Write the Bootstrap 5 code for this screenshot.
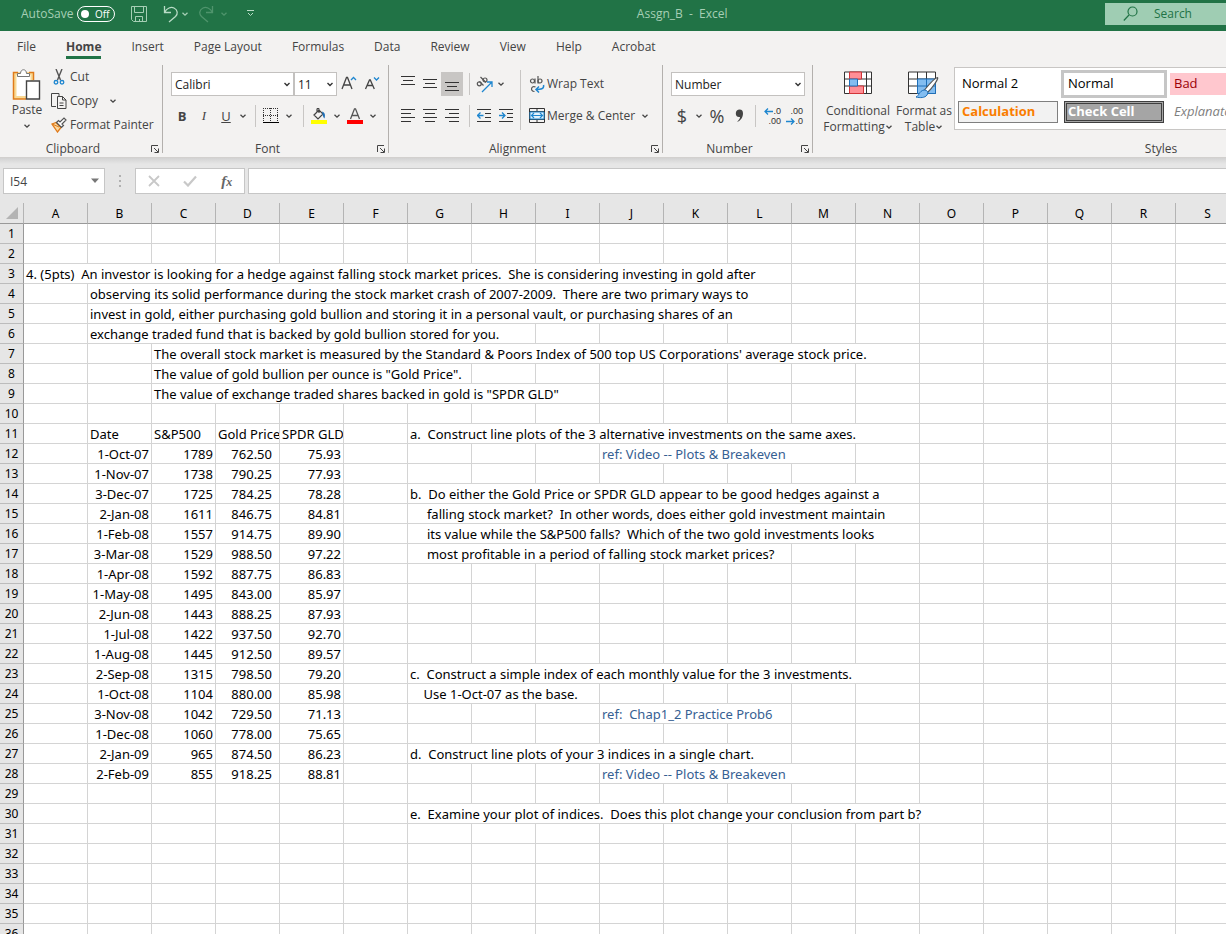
<!DOCTYPE html>
<html lang="en">
<head>
<meta charset="utf-8">
<meta name="viewport" content="width=device-width, initial-scale=1">
<title>Assgn_B - Excel</title>
<link href="https://cdn.jsdelivr.net/npm/bootstrap@5.3.0/dist/css/bootstrap.min.css" rel="stylesheet">
<style>
body{font:12px/16px "Open Sans","Noto Sans",sans-serif;color:#444;background:#e6e6e6}
button{font:inherit;color:inherit;background:none;border:0;padding:0}
svg{display:block;flex:none;fill:none}
.titlebar{background:#217346;color:#a6cfb5;height:31px;padding:0 0 4px 21px}
.autosw{appearance:none;width:38px;height:16px;border:1px solid #fff;border-radius:8px;margin:0}
.switch-wrap{display:grid;color:#fff}
.switch-wrap>*{grid-area:1/1}
.switch-face{padding:0 6px 0 4px;font-size:10px;pointer-events:none}
.knob{width:8px;height:8px;border-radius:50%;background:#fff}
.searchbox{background:#9fcdb3;color:#217346;height:22px;width:121px;padding-left:18px;gap:16px}
.searchbox input{background:none;border:0;padding:0;width:60px;color:#217346}
.searchbox input::placeholder{color:#217346;opacity:1}
.ribbon{background:#f3f2f1;border-bottom:1px solid #d2d0ce}
.tabs{gap:30px;padding:6px 17px 0;height:31px}
.tabs a{color:#444;text-decoration:none;line-height:20px;height:22px}
.tabs a.active{font-weight:700;border-bottom:3px solid #217346}
.groups{height:95px;padding-top:3px;overflow:hidden}
.rgroup{flex:none;position:relative;height:92px}
.rgroup+.rgroup::before{content:"";position:absolute;left:-1px;top:0;height:88px;width:1px;background:#b3b0ad}
.rgroup .body-area{height:76px}
.glabel{height:16px}
.launch{width:17px;height:16px}
.g-clip{width:163px}.g-font{width:226px}.g-align{width:274px}.g-num{width:150px}.g-styles{width:696px}
.rows{padding:3px 0 0 8px}
.rrow{height:32px}
.cliprow{height:24px;gap:3px}
.b12{width:12px;height:24px}.b20{width:20px;height:24px}.b22{width:22px;height:24px}.b24{width:24px;height:24px}
.b12{display:flex;align-items:center;justify-content:center}
.pressed{background:#c8c6c4}
.vsep{width:1px;height:22px;background:#c8c6c4;margin:0 3px 0 6px}
.vtall{width:1px;height:60px;background:#c8c6c4;margin:2px 8px 0 3px}
.combo{height:24px;border:1px solid #c3c1bf;border-radius:0;padding:1px 14px 0 3px;font-size:12px;line-height:21px;color:#222;background-color:#fff;background-position:right 2px center;background-size:8px;
background-image:url("data:image/svg+xml,%3csvg xmlns='http://www.w3.org/2000/svg' viewBox='0 0 8 8'%3e%3cpath d='M1.5 3L4 5.5 6.5 3' fill='none' stroke='%23333' stroke-width='1.4'/%3e%3c/svg%3e")}
.c-face{width:123px}.c-size{width:43px}.c-num{width:134px}
.fb{font-size:13px}
.big{font-size:18px;line-height:24px}
.dec{font:9px/10px "Liberation Sans",sans-serif;color:#333}
.dec .with-arrow{height:10px}
.gallery{background:#fff;border:1px solid #c8c6c4;width:530px;height:63px;padding:5px 3px;display:grid;grid-template-columns:repeat(4,100px);grid-auto-rows:22px;gap:6px;overflow:hidden}
.gallery button{text-align:left;padding:0 4px 2px;font:13px/18px "Open Sans","Noto Sans",sans-serif;color:#000;white-space:nowrap;overflow:hidden}
.gallery .picked{outline:3px solid #c6c6c6}
.gallery .bad{background:#ffc7ce;color:#9c0006}
.gallery .calc{background:#f2f2f2;border:1px solid #7f7f7f;color:#fa7d00;font-weight:700;padding-left:3px}
.gallery .check{background:#a5a5a5;border:3px double #3f3f3f;color:#fff;font-weight:700;padding:0 1px 2px;line-height:14px}
.gallery .expl{color:#7f7f7f;font-style:italic}
.fbar{background:linear-gradient(#d2d2d2,#e6e6e6 6px);padding:10px 0 9px 3px}
.fbox{background:#fff;border:1px solid #c6c6c6;height:26px}
.fbox input,.fbox-input{border:0;outline:0;width:70px;padding:1px 6px 0;color:#444}
.namebox{width:102px}.fxbox{width:110px}
.fbox-input{border:1px solid #c6c6c6;border-right:0;height:26px;flex:1;margin-left:3px}
.dots{width:30px}
.sheet{flex:1;overflow:hidden;background:#e6e6e6}
.grid{table-layout:fixed;border-collapse:separate;border-spacing:0;width:1240px;font:13px/18px "Noto Sans","Open Sans",sans-serif;color:#000}
.grid col{width:64px}.grid col:first-child{width:24px}
.grid th{font-weight:400;text-align:center;background:#e6e6e6;padding:1px 0 0;font-size:12px}
.grid thead th{height:21px;border-bottom:1px solid #999;border-right:1px solid #b4b4b4}
.grid tbody th{height:20px;border-right:1px solid #999;border-bottom:1px solid #bcbcbc}
.grid td{height:20px;background:#fff;border-right:1px solid #d4d4d4;border-bottom:1px solid #d4d4d4;padding:0 2px;white-space:pre;overflow:hidden}
.grid td.num{text-align:right}
.grid td.acct{text-align:right;padding-right:7px}
.grid td.ref{color:#366092}
.grid td.flush{padding-right:0}
</style>
</head>
<body class="d-flex flex-column vh-100 overflow-hidden">
<svg width="0" height="0" class="position-absolute" aria-hidden="true">
<symbol id="chev" viewBox="0 0 8 8"><path d="M1.500 2.800L4 5.200 6.500 2.800" stroke="currentColor" stroke-width="1.300"/></symbol>
<symbol id="launch" viewBox="0 0 10 10"><path d="M1.500 8V1.500H8M4 4l4 4M8.500 4.500v4h-4" stroke="#444"/></symbol>
</svg>

<header class="titlebar d-flex align-items-center">
<label for="auto" class="me-1">AutoSave</label>
<span class="switch-wrap"><input class="autosw" type="checkbox" role="switch" id="auto"><span class="switch-face d-flex align-items-center justify-content-between"><i class="knob"></i><span>Off</span></span></span>
<button class="ms-3" aria-label="Save"><svg width="16" height="18" viewBox="0 0 16 18" stroke="#a6cfb5"><path d="M.5 1.500h15v15H2.500l-2-2zM3.500 1.500v6h9v-6M4.500 16.500v-5h7v5M8.500 14v2"/></svg></button>
<button class="ms-3" aria-label="Undo"><svg width="16" height="18" viewBox="0 0 16 18" stroke="#b9dcc6" stroke-width="1.300"><path d="M1.500 1v6.500H8M1.500 7.500C4 3 8 1.500 11 3c4 2 4 6 1.500 8.500L6 17"/></svg></button>
<button class="b12" aria-label="Undo list"><svg width="8" height="8"><use href="#chev"/></svg></button>
<button class="ms-2" aria-label="Redo"><svg width="15" height="18" viewBox="0 0 15 18" stroke="#4f946c" stroke-width="1.300"><path d="M13.500 1v6.500H7M13.500 7.500C11 3 7 1.500 4 3 0 5 0 9 2.500 11.500L9 17"/></svg></button>
<button class="b12 ms-1" aria-label="Redo list" style="color:#4f946c"><svg width="8" height="8"><use href="#chev"/></svg></button>
<button class="ms-3" aria-label="Customize toolbar"><svg width="9" height="9" viewBox="0 0 9 9" stroke="#b9dcc6"><path d="M1 1.500h7M2 4l2.500 2.500L7 4"/></svg></button>
<div class="mx-auto ps-1" style="white-space:pre">Assgn_B  -  Excel</div>
<div class="searchbox d-flex align-items-center"><svg width="15" height="16" viewBox="0 0 15 16" stroke="#217346" stroke-width="1.200"><circle cx="9.500" cy="5.500" r="4.500"/><path d="M6 9L.8 14.500"/></svg><input type="search" placeholder="Search" aria-label="Search"></div>
</header>

<section class="ribbon">
<nav class="tabs d-flex"><a href="#">File</a><a href="#" class="active">Home</a><a href="#">Insert</a><a href="#">Page Layout</a><a href="#">Formulas</a><a href="#">Data</a><a href="#">Review</a><a href="#">View</a><a href="#">Help</a><a href="#">Acrobat</a></nav>
<div class="groups d-flex">

<div class="rgroup g-clip">
<div class="body-area d-flex">
<button class="d-flex flex-column align-items-center" style="width:51px;padding:3px 0 0 3px"><svg width="30" height="34" viewBox="0 0 30 34"><path d="M3 5.500h17v24H3z" fill="#fff" stroke="#f9d993" stroke-width="3"/><path d="M6 4.500H1.500V31H14M17 4.500h4.500V12" stroke="#e07b1a" stroke-width="1.500"/><path d="M5.500 8.500v-3h3c0-5 6-5 6 0h3v3z" fill="#fff" stroke="#777"/><path d="M14.500 13h13v18h-13z" fill="#fff" stroke="#444" stroke-width="1.400"/></svg><span class="pt-0">Paste</span><svg width="8" height="14" viewBox="0 -4 8 14"><use href="#chev" width="8" height="8"/></svg></button>
<div class="d-flex flex-column align-items-start">
<button class="cliprow d-flex align-items-center"><svg width="16" height="16" viewBox="0 0 16 16"><path d="M5 0l4.500 11M11 0L6.500 11" stroke="#555" stroke-width="1.400"/><circle cx="5" cy="13.300" r="1.800" stroke="#1e86cf" stroke-width="1.300"/><circle cx="11" cy="13.300" r="1.800" stroke="#1e86cf" stroke-width="1.300"/></svg>Cut</button>
<button class="cliprow d-flex align-items-center"><svg width="16" height="16" viewBox="0 0 16 16" stroke="#444"><path d="M5 13.500H.500V.500H8V3M6.500 3.500h5l3.500 3.500v8.500H6.500z"/><path d="M11.500 3.500V7H15M8.500 10h4M8.500 12.500h4"/></svg>Copy<svg width="8" height="8" class="ms-2"><use href="#chev"/></svg></button>
<button class="cliprow d-flex align-items-center"><svg width="16" height="16" viewBox="0 0 16 16"><path d="M1 7l4-1.500 5 5-3.500 4.500z" fill="#fbd9a0" stroke="#e07b1a" stroke-width="1.300"/><path d="M1 7l7 3" stroke="#e07b1a"/><path d="M5.500 5.500l2-2L9 5l4-4 2 2-4 4 1.500 1.500-2 2z" fill="#fff" stroke="#555" stroke-width="1.200"/></svg>Format Painter</button>
</div></div>
<div class="glabel d-flex"><span class="flex-fill text-center">Clipboard</span><button class="launch" aria-label="Clipboard settings"><svg width="10" height="10" class="ms-1"><use href="#launch"/></svg></button></div>
</div>

<div class="rgroup g-font">
<div class="body-area rows">
<div class="rrow d-flex align-items-center"><select class="form-select combo c-face" aria-label="Font"><option>Calibri</option></select><select class="form-select combo c-size" aria-label="Font size"><option>11</option></select>
<button class="b24 d-flex align-items-center justify-content-center" aria-label="Increase font size"><svg width="16" height="16" viewBox="0 0 16 16"><path d="M1 13L5.500 1.500h1L11 13M2.500 9h7" stroke="#444" stroke-width="1.300"/><path d="M10 4l2.500-2.500L15 4" stroke="#1e86cf" stroke-width="1.300"/></svg></button>
<button class="b22 d-flex align-items-center justify-content-center" aria-label="Decrease font size"><svg width="16" height="16" viewBox="0 0 16 16"><path d="M1.500 13L5.500 4h.8l4 9M3 9.500h6" stroke="#444" stroke-width="1.300"/><path d="M10 1.500L12.500 4 15 1.500" stroke="#1e86cf" stroke-width="1.300"/></svg></button></div>
<div class="rrow d-flex align-items-center"><button class="b22 fb fw-bold">B</button><button class="b22 fb fst-italic" style="font-family:'Liberation Serif',serif">I</button><button class="b22 fb text-decoration-underline">U</button><button class="b12" aria-label="Underline styles"><svg width="8" height="8"><use href="#chev"/></svg></button><i class="vsep"></i>
<button class="b24 d-flex align-items-center justify-content-center" aria-label="Borders"><svg width="16" height="16" viewBox="0 0 16 16" shape-rendering="crispEdges"><path d="M0 .5h16M.5 0v14M14.500 0v14M7.500 0v14M0 7.500h16" stroke="#333" stroke-dasharray="1 1"/><path d="M0 14.500h16" stroke="#000"/></svg></button><button class="b12" aria-label="Border styles"><svg width="8" height="8"><use href="#chev"/></svg></button><i class="vsep ms-2"></i>
<button class="b24 d-flex align-items-center justify-content-center" aria-label="Fill color"><svg width="16" height="16" viewBox="0 0 16 16"><path d="M3 7l5-5 4 4-5 5zM6 4V1.500c0-1.500 2-1.500 2 0V5" stroke="#444" stroke-width="1.200"/><path d="M11 3.500c3 1 3.500 3.500 2.500 7-1.500-1-1.500-3-2.500-7z" fill="#1e6fb8"/><path d="M0 12h16v4H0z" fill="#ff0"/></svg></button><button class="b12" aria-label="Fill colors"><svg width="8" height="8"><use href="#chev"/></svg></button>
<button class="b24 d-flex align-items-center justify-content-center" aria-label="Font color"><svg width="16" height="16" viewBox="0 0 16 16"><path d="M3.500 11L7.500.800h1L12.500 11M5 7.500h6" stroke="#555" stroke-width="1.300"/><path d="M0 12h16v4H0z" fill="red"/></svg></button><button class="b12" aria-label="Font colors"><svg width="8" height="8"><use href="#chev"/></svg></button></div>
</div>
<div class="glabel d-flex"><span class="flex-fill text-center">Font</span><button class="launch" aria-label="Font settings"><svg width="10" height="10" class="ms-1"><use href="#launch"/></svg></button></div>
</div>

<div class="rgroup g-align">
<div class="body-area rows d-flex">
<div>
<div class="rrow d-flex align-items-center">
<button class="b22 px-1" aria-label="Top align"><svg width="14" height="24" viewBox="0 0 14 24" stroke="#333"><path d="M0 4.500h14M2 8.500h10M0 12.500h14"/></svg></button>
<button class="b22 px-1" aria-label="Middle align"><svg width="14" height="24" viewBox="0 0 14 24" stroke="#333"><path d="M0 7.500h14M2 11.500h10M0 15.500h14"/></svg></button>
<button class="b22 px-1 pressed" aria-label="Bottom align"><svg width="14" height="24" viewBox="0 0 14 24" stroke="#333"><path d="M0 10.500h14M2 14.500h10M0 18.500h14"/></svg></button>
<i class="vsep"></i>
<button class="b22 d-flex align-items-center justify-content-center" aria-label="Orientation"><svg width="17" height="17" viewBox="0 0 17 17"><g stroke="#555" stroke-width="1.200"><circle cx="3.300" cy="7.800" r="2"/><path d="M3.500 5.500l4 4M4.500 1l5.500 5.500"/><circle cx="9" cy="4" r="2"/></g><path d="M6 16l9.500-9.500M11 6h5v5" stroke="#1e86cf" stroke-width="1.300"/></svg></button><button class="b12" aria-label="Orientations"><svg width="8" height="8"><use href="#chev"/></svg></button>
</div>
<div class="rrow d-flex align-items-center">
<button class="b22 px-1" aria-label="Align left"><svg width="14" height="14" viewBox="0 0 14 14" stroke="#333"><path d="M0 .5h14M0 4.500h10M0 8.500h14M0 12.500h10"/></svg></button>
<button class="b22 px-1" aria-label="Center"><svg width="14" height="14" viewBox="0 0 14 14" stroke="#333"><path d="M0 .5h14M2 4.500h10M0 8.500h14M2 12.500h10"/></svg></button>
<button class="b22 px-1" aria-label="Align right"><svg width="14" height="14" viewBox="0 0 14 14" stroke="#333"><path d="M0 .5h14M4 4.500h10M0 8.500h14M4 12.500h10"/></svg></button>
<i class="vsep"></i>
<button class="b22 px-1" aria-label="Decrease indent"><svg width="14" height="14" viewBox="0 0 14 14" stroke="#333"><path d="M0 .5h14M8 4.500h6M8 8.500h6M0 12.500h14"/><path d="M6.500 6.500H1M3.500 3.500l-3 3 3 3" stroke="#1e86cf" stroke-width="1.300"/></svg></button>
<button class="b22 px-1" aria-label="Increase indent"><svg width="14" height="14" viewBox="0 0 14 14" stroke="#333"><path d="M0 .5h14M8 4.500h6M8 8.500h6M0 12.500h14"/><path d="M0 6.500h5.500M3 3.500l3 3-3 3" stroke="#1e86cf" stroke-width="1.300"/></svg></button>
</div></div>
<i class="vtall"></i>
<div>
<button class="rrow d-flex align-items-center" style="gap:2px"><svg width="16" height="17" viewBox="0 0 16 17"><g stroke="#555" stroke-width="1.200"><circle cx="3.500" cy="5" r="2"/><path d="M6 2.500v5M9 0v7.500M6.500 11c-4-2-6 4-1 4.500"/><circle cx="11" cy="5" r="2"/></g><path d="M14.500 9c1 4-3 4.500-7 4.500M10 10.500l-3 3 3 3" stroke="#1e86cf" stroke-width="1.500"/></svg>Wrap Text</button>
<button class="rrow d-flex align-items-center" style="gap:2px"><svg width="16" height="16" viewBox="0 0 16 16"><path d="M.5.5h15v14H.500zM.500 3.500h15M.500 11.500h15M8 .500v3M8 11.500v3" stroke="#333"/><path d="M1 4h14v7H1z" fill="#e4f1fa" stroke="#1e86cf"/><path d="M3 7.500h10M5 5L2.500 7.500 5 10M11 5l2.500 2.500L11 10" stroke="#1e86cf" stroke-width="1.200"/></svg>Merge &amp; Center<svg width="8" height="8" class="ms-1"><use href="#chev"/></svg></button>
</div></div>
<div class="glabel d-flex"><span class="flex-fill text-center">Alignment</span><button class="launch" aria-label="Alignment settings"><svg width="10" height="10" class="ms-1"><use href="#launch"/></svg></button></div>
</div>

<div class="rgroup g-num">
<div class="body-area rows">
<div class="rrow d-flex align-items-center"><select class="form-select combo c-num" aria-label="Number format"><option>Number</option></select></div>
<div class="rrow d-flex align-items-center"><button class="b22 big">$</button><button class="b12" aria-label="Currencies"><svg width="8" height="8"><use href="#chev"/></svg></button><button class="b24 big">%</button>
<button class="b20 d-flex align-items-center justify-content-center" aria-label="Comma style"><svg width="9" height="14" viewBox="0 0 9 14"><path d="M4.500.5C7 .5 8 2 8 4.500 8 9 5 12 2 13c2-2 3-3.500 3-5C2 8.500.800 6.500.800 4.200.800 2 2.500.5 4.500.5z" fill="#444"/></svg></button><i class="vsep"></i>
<button class="b22 dec" aria-label="Increase decimal"><span class="with-arrow d-flex align-items-center justify-content-end"><svg width="9" height="7" viewBox="0 0 9 7"><path d="M9 3.500H1M4 .5l-3 3 3 3" stroke="#1e86cf" stroke-width="1.300"/></svg>.0</span><span class="d-block text-end">.00</span></button>
<button class="b22 dec" aria-label="Decrease decimal"><span class="d-block text-end">.00</span><span class="with-arrow d-flex align-items-center justify-content-end"><svg width="9" height="7" viewBox="0 0 9 7"><path d="M0 3.500h8M5 .5l3 3-3 3" stroke="#1e86cf" stroke-width="1.300"/></svg>.0</span></button></div>
</div>
<div class="glabel d-flex"><span class="flex-fill text-center">Number</span><button class="launch" aria-label="Number settings"><svg width="10" height="10" class="ms-1"><use href="#launch"/></svg></button></div>
</div>

<div class="rgroup g-styles">
<div class="body-area d-flex" style="padding:2px 0 0 10px">
<button class="d-flex flex-column align-items-center" style="width:70px;padding-top:4px"><svg width="28" height="24" viewBox="0 0 28 24" class="mb-2"><path d="M.5 1h27v21.500H.500zM.500 8h27M.500 15h27M5.500 1v21M22.500 1v21" fill="#fff" stroke="#333"/><path d="M5.500 1h12v7h-12zM5.500 15h14v7.500h-14z" fill="#ff8f96" stroke="#d13438"/><path d="M5.500 8h8v7h-8z" fill="#83bdf0" stroke="#1e6fb8"/></svg><span>Conditional</span><span class="d-flex align-items-center text-nowrap">Formatting<svg width="8" height="8"><use href="#chev"/></svg></span></button>
<button class="d-flex flex-column align-items-center" style="width:61px;padding:4px 0 0 1px"><svg width="32" height="28" viewBox="0 0 32 28" class="mb-1"><path d="M.5 1h27v21.500H.500zM.500 8h27M.500 15h27M9.500 1v21M18.500 1v21" fill="#fff" stroke="#333"/><path d="M9.500 8h18v14.500h-18zM9.500 15h18M18.500 8v14" fill="#83bdf0" stroke="#1e6fb8"/><path d="M29.500 6.500c1.500.5-5 10.500-10 15l-3-2.500c4-5 10-12 13-12.500z" fill="#fff" stroke="#555" stroke-width="1.200"/><path d="M16 19c3 0 5 2 3 5s-7 3-11 2c3-1 3-6 8-7z" fill="#83bdf0" stroke="#1e6fb8"/></svg><span class="text-nowrap">Format as</span><span class="d-flex align-items-center">Table<svg width="8" height="8"><use href="#chev"/></svg></span></button>
<div class="gallery"><button>Normal 2</button><button class="picked">Normal</button><button class="bad">Bad</button><span></span><button class="calc">Calculation</button><button class="check">Check Cell</button><button class="expl">Explanatory</button></div>
</div>
<div class="glabel text-center">Styles</div>
</div>
</div>
</section>

<section class="fbar d-flex">
<div class="fbox namebox d-flex align-items-center justify-content-between"><input value="I54" aria-label="Name box"><button class="pe-1" aria-label="Names"><svg width="10" height="6" viewBox="0 0 10 6"><path d="M1 .5h8L5 5z" fill="#777"/></svg></button></div>
<div class="dots d-flex align-items-center justify-content-center"><svg width="2" height="12" viewBox="0 0 2 12"><path d="M0 0h2v2H0zM0 5h2v2H0zM0 10h2v2H0z" fill="#b0b0b0"/></svg></div>
<div class="fbox fxbox d-flex align-items-center justify-content-around">
<button aria-label="Cancel"><svg width="12" height="12" viewBox="0 0 12 12" stroke="#c8c8c8" stroke-width="1.800"><path d="M1 1l10 10M11 1L1 11"/></svg></button>
<button aria-label="Enter"><svg width="14" height="12" viewBox="0 0 14 12" stroke="#c8c8c8" stroke-width="2.200"><path d="M1 6.500L5 10.500 13 1.500"/></svg></button>
<button style="font:italic bold 15px/20px 'Liberation Serif',serif;color:#666">f<span style="font-size:12px">x</span></button></div>
<input class="fbox-input" aria-label="Formula bar">
</section>

<main class="sheet">
<table class="grid"><colgroup id="cols"></colgroup><thead><tr id="head"></tr></thead><tbody id="rows"></tbody></table>
</main>

<script>
const letters = "ABCDEFGHIJKLMNOPQRS".split("");
const rowCount = 36;
// Each entry: row -> list of [column, text, columns spanned, class]
const cells = {
3: [["A", "4. (5pts)  An investor is looking for a hedge against falling stock market prices.  She is considering investing in gold after", 12]],
4: [["B", "observing its solid performance during the stock market crash of 2007-2009.  There are two primary ways to", 11]],
5: [["B", "invest in gold, either purchasing gold bullion and storing it in a personal vault, or purchasing shares of an", 11]],
6: [["B", "exchange traded fund that is backed by gold bullion stored for you.", 7]],
7: [["C", "The overall stock market is measured by the Standard & Poors Index of 500 top US Corporations' average stock price.", 12]],
8: [["C", "The value of gold bullion per ounce is \"Gold Price\".", 5]],
9: [["C", "The value of exchange traded shares backed in gold is \"SPDR GLD\"", 7]],
11: [["B", "Date", 1], ["C", "S&P500", 1], ["D", "Gold Price", 1, "flush"], ["E", "SPDR GLD", 1, "flush"], ["G", "a.  Construct line plots of the 3 alternative investments on the same axes.", 8]],
12: [["J", "ref: Video -- Plots & Breakeven", 4, "ref"]],
14: [["G", "b.  Do either the Gold Price or SPDR GLD appear to be good hedges against a", 8]],
15: [["G", "     falling stock market?  In other words, does either gold investment maintain", 8]],
16: [["G", "     its value while the S&P500 falls?  Which of the two gold investments looks", 8]],
17: [["G", "     most profitable in a period of falling stock market prices?", 6]],
23: [["G", "c.  Construct a simple index of each monthly value for the 3 investments.", 8]],
24: [["G", "    Use 1-Oct-07 as the base.", 3]],
25: [["J", "ref:  Chap1_2 Practice Prob6", 3, "ref"]],
27: [["G", "d.  Construct line plots of your 3 indices in a single chart.", 6]],
28: [["J", "ref: Video -- Plots & Breakeven", 4, "ref"]],
30: [["G", "e.  Examine your plot of indices.  Does this plot change your conclusion from part b?", 9]]
};
const prices = `1-Oct-07 1789 762.50 75.93
1-Nov-07 1738 790.25 77.93
3-Dec-07 1725 784.25 78.28
2-Jan-08 1611 846.75 84.81
1-Feb-08 1557 914.75 89.90
3-Mar-08 1529 988.50 97.22
1-Apr-08 1592 887.75 86.83
1-May-08 1495 843.00 85.97
2-Jun-08 1443 888.25 87.93
1-Jul-08 1422 937.50 92.70
1-Aug-08 1445 912.50 89.57
2-Sep-08 1315 798.50 79.20
1-Oct-08 1104 880.00 85.98
3-Nov-08 1042 729.50 71.13
1-Dec-08 1060 778.00 75.65
2-Jan-09 965 874.50 86.23
2-Feb-09 855 918.25 88.81`.split("\n");
prices.forEach((line, i) => {
  const [d, s, g, e] = line.split(" ");
  cells[12 + i] = [["B", d, 1, "num"], ["C", s, 1, "num"], ["D", g, 1, "acct"], ["E", e, 1, "num"]].concat(cells[12 + i] || []);
});
const make = (tag, text) => { const n = document.createElement(tag); if (text) n.textContent = text; return n; };
for (let i = 0; i <= letters.length; i++) cols.append(make("col"));
const corner = make("th");
corner.innerHTML = '<svg width="14" height="13" viewBox="0 0 14 13" class="ms-auto me-1"><path d="M13 0v12H1z" fill="#b4b4b4"/></svg>';
head.append(corner, ...letters.map(l => make("th", l)));
for (let r = 1; r <= rowCount; r++) {
  const tr = make("tr");
  tr.append(make("th", String(r)));
  for (let c = 0; c < letters.length;) {
    const hit = (cells[r] || []).find(x => x[0] === letters[c]);
    const td = make("td", hit && hit[1]);
    if (hit && hit[2] > 1) td.colSpan = hit[2];
    if (hit && hit[3]) td.className = hit[3];
    tr.append(td);
    c += hit ? hit[2] : 1;
  }
  rows.append(tr);
}
</script>
<script src="https://cdn.jsdelivr.net/npm/bootstrap@5.3.0/dist/js/bootstrap.bundle.min.js"></script>
</body>
</html>
